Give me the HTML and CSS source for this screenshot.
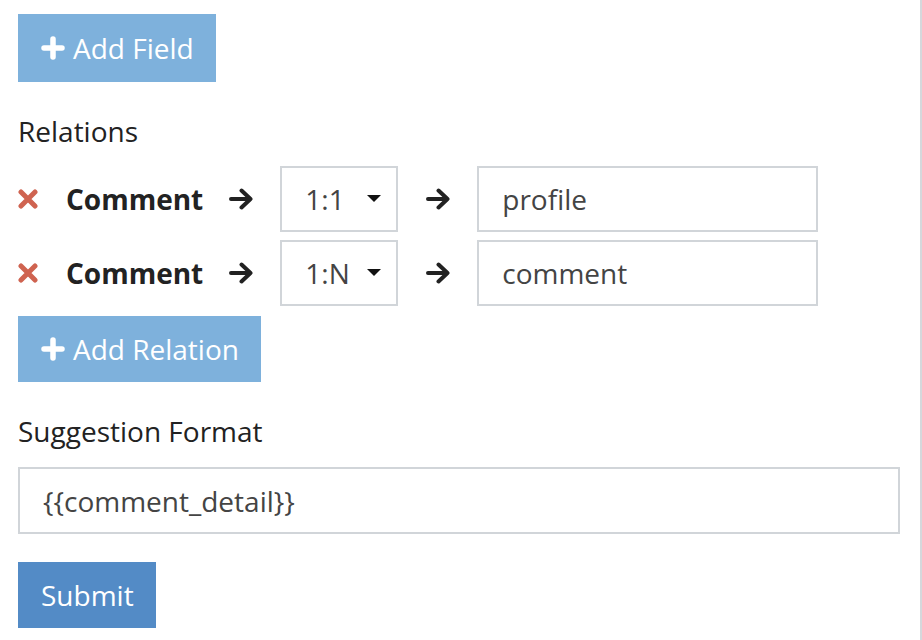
FILE: index.html
```html
<!DOCTYPE html>
<html>
<head>
<meta charset="utf-8">
<link rel="stylesheet" href="styles.css">
</head>
<body>
<div class="page">
  <button class="btn btn-light btn-add-field" type="button">
    <svg class="plus" viewBox="0 0 24 24" width="24" height="24"><path d="M12 3V21M3 12H21" stroke="#fff" stroke-width="5.5" stroke-linecap="round" fill="none"/></svg>
    <span>Add Field</span>
  </button>

  <div class="label label-relations">Relations</div>

  <div class="relations">
    <div class="rel-row">
      <svg class="remove" viewBox="0 0 20 20" width="20" height="20"><path d="M3 3L17 17M17 3L3 17" stroke="#cf6350" stroke-width="5" stroke-linecap="round" fill="none"/></svg>
      <span class="model">Comment</span>
      <svg class="arrow" viewBox="0 0 26 22" width="26" height="22"><path d="M3 11H22M13.5 2.5L22.5 11L13.5 19.5" stroke="#222" stroke-width="4" stroke-linecap="round" stroke-linejoin="round" fill="none"/></svg>
      <div class="select"><span>1:1</span><span class="caret"></span></div>
      <svg class="arrow" viewBox="0 0 26 22" width="26" height="22"><path d="M3 11H22M13.5 2.5L22.5 11L13.5 19.5" stroke="#222" stroke-width="4" stroke-linecap="round" stroke-linejoin="round" fill="none"/></svg>
      <input class="field field-name" type="text" value="profile">
    </div>
    <div class="rel-row">
      <svg class="remove" viewBox="0 0 20 20" width="20" height="20"><path d="M3 3L17 17M17 3L3 17" stroke="#cf6350" stroke-width="5" stroke-linecap="round" fill="none"/></svg>
      <span class="model">Comment</span>
      <svg class="arrow" viewBox="0 0 26 22" width="26" height="22"><path d="M3 11H22M13.5 2.5L22.5 11L13.5 19.5" stroke="#222" stroke-width="4" stroke-linecap="round" stroke-linejoin="round" fill="none"/></svg>
      <div class="select"><span>1:N</span><span class="caret"></span></div>
      <svg class="arrow" viewBox="0 0 26 22" width="26" height="22"><path d="M3 11H22M13.5 2.5L22.5 11L13.5 19.5" stroke="#222" stroke-width="4" stroke-linecap="round" stroke-linejoin="round" fill="none"/></svg>
      <input class="field field-name" type="text" value="comment">
    </div>
  </div>

  <button class="btn btn-light btn-add-relation" type="button">
    <svg class="plus" viewBox="0 0 24 24" width="24" height="24"><path d="M12 3V21M3 12H21" stroke="#fff" stroke-width="5.5" stroke-linecap="round" fill="none"/></svg>
    <span>Add Relation</span>
  </button>

  <div class="label label-format">Suggestion Format</div>
  <input class="field field-format" type="text" value="{{comment_detail}}">

  <button class="btn btn-primary btn-submit" type="submit">Submit</button>
</div>
</body>
</html>
```

FILE: styles.css
```css
html, body {
  margin: 0;
  padding: 0;
  background: #fff;
}

.page {
  box-sizing: border-box;
  width: 922px;
  min-height: 640px;
  border-right: 2px solid #d5d8dc;
  padding: 14px 0 0 18px;
  font-family: "Open Sans", "Liberation Sans", sans-serif;
  font-size: 28px;
  color: #222;
  display: flex;
  flex-direction: column;
  align-items: flex-start;
}

.btn {
  display: flex;
  align-items: center;
  border: 0;
  margin: 0;
  height: 66px;
  padding: 0 22px 0 23px;
  font-family: "Open Sans", "Liberation Sans", sans-serif;
  font-size: 28px;
  color: #fff;
  cursor: pointer;
}

.btn-light {
  background: #7eb1dc;
}

.btn-primary {
  background: #538bc6;
}

.btn-add-field {
  height: 68px;
}

.plus {
  display: block;
  margin-right: 8px;
}

.label {
  margin-top: 29px;
  line-height: 40px;
  color: #222;
}

.relations {
  margin-top: 15px;
  display: flex;
  flex-direction: column;
  gap: 8px;
}

.rel-row {
  display: flex;
  align-items: center;
  height: 66px;
}

.remove {
  display: block;
  margin-right: 28px;
}

.model {
  font-weight: 700;
  color: #222;
  margin-right: 25px;
}

.arrow {
  display: block;
  margin-right: 26px;
}

.select {
  box-sizing: border-box;
  width: 118px;
  height: 66px;
  border: 2px solid #d1d5d9;
  padding: 0 15px 0 23px;
  display: flex;
  align-items: center;
  justify-content: space-between;
  color: #444;
  margin-right: 27px;
}

.caret {
  width: 0;
  height: 0;
  border-left: 7px solid transparent;
  border-right: 7px solid transparent;
  border-top: 7px solid #111;
  margin-top: -2px;
}

.field {
  box-sizing: border-box;
  height: 66px;
  border: 2px solid #d1d5d9;
  border-radius: 0;
  padding: 0 23px;
  margin: 0;
  font-family: "Open Sans", "Liberation Sans", sans-serif;
  font-size: 28px;
  color: #444;
  background: #fff;
  outline: none;
}

.field-name {
  width: 341px;
}

.btn-add-relation {
  margin-top: 10px;
}

.label-format {
  margin-top: 29px;
}

.field-format {
  margin-top: 16px;
  width: 882px;
  height: 67px;
}

.btn-submit {
  margin-top: 28px;
  padding: 0 22px 0 23px;
}
```
